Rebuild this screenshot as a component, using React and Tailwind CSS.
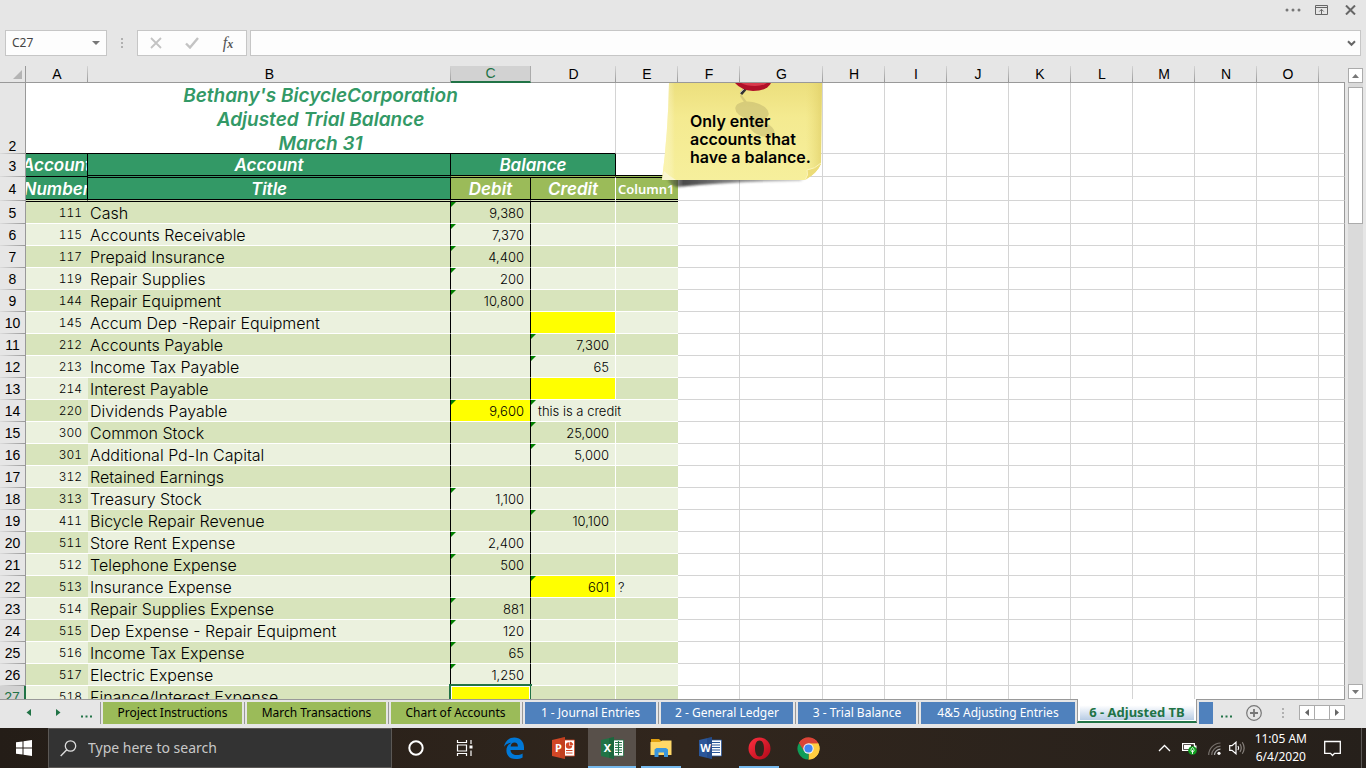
import React from "react";

const ACCOUNTS = [
  { row: 5, no: 111, title: "Cash", debit: "9,380" },
  { row: 6, no: 115, title: "Accounts Receivable", debit: "7,370" },
  { row: 7, no: 117, title: "Prepaid Insurance", debit: "4,400" },
  { row: 8, no: 119, title: "Repair Supplies", debit: "200" },
  { row: 9, no: 144, title: "Repair Equipment", debit: "10,800" },
  { row: 10, no: 145, title: "Accum Dep -Repair Equipment", markCredit: true },
  { row: 11, no: 212, title: "Accounts Payable", credit: "7,300" },
  { row: 12, no: 213, title: "Income Tax Payable", credit: "65" },
  { row: 13, no: 214, title: "Interest Payable", markCredit: true },
  { row: 14, no: 220, title: "Dividends Payable", debit: "9,600", markDebit: true, note: "this is a credit" },
  { row: 15, no: 300, title: "Common Stock", credit: "25,000" },
  { row: 16, no: 301, title: "Additional Pd-In Capital", credit: "5,000" },
  { row: 17, no: 312, title: "Retained Earnings" },
  { row: 18, no: 313, title: "Treasury Stock", debit: "1,100" },
  { row: 19, no: 411, title: "Bicycle Repair Revenue", credit: "10,100" },
  { row: 20, no: 511, title: "Store Rent Expense", debit: "2,400" },
  { row: 21, no: 512, title: "Telephone Expense", debit: "500" },
  { row: 22, no: 513, title: "Insurance Expense", credit: "601", markCredit: true, extra: "?" },
  { row: 23, no: 514, title: "Repair Supplies Expense", debit: "881" },
  { row: 24, no: 515, title: "Dep Expense - Repair Equipment", debit: "120" },
  { row: 25, no: 516, title: "Income Tax Expense", debit: "65" },
  { row: 26, no: 517, title: "Electric Expense", debit: "1,250" },
  { row: 27, no: 518, title: "Finance/Interest Expense", markDebit: true, active: true },
];

const COLUMNS = ["A", "B", "C", "D", "E", "F", "G", "H", "I", "J", "K", "L", "M", "N", "O"];
const EMPTY = ["F", "G", "H", "I", "J", "K", "L", "M", "N", "O"];

const SHEETS = [
  { name: "Project Instructions", style: "w-[139px] bg-[#9bbb59] text-black" },
  { name: "March Transactions", style: "w-[139px] bg-[#9bbb59] text-black" },
  { name: "Chart of Accounts", style: "w-[129px] bg-[#9bbb59] text-black" },
  { name: "1 - Journal Entries", style: "w-[131px] bg-[#4f81bd] text-white" },
  { name: "2 - General Ledger", style: "w-[132px] bg-[#4f81bd] text-white" },
  { name: "3 - Trial Balance", style: "w-[118px] bg-[#4f81bd] text-white" },
  { name: "4&5 Adjusting Entries", style: "w-[154px] bg-[#4f81bd] text-white" },
];

function Flag() {
  return (
    <svg className="absolute left-0 top-0" width="5" height="5" viewBox="0 0 5 5" aria-hidden="true">
      <path d="M0 0H5L0 5Z" fill="#008000" />
    </svg>
  );
}

function TitleBar() {
  return (
    <header className="flex h-[30px] shrink-0 items-start justify-end gap-[14px] pr-[10px] pt-[3px]">
      <button aria-label="More" className="flex h-[14px] w-4 items-center">
        <svg width="16" height="4" viewBox="0 0 16 4"><g fill="#777"><circle cx="2" cy="2" r="1.5" /><circle cx="8" cy="2" r="1.5" /><circle cx="14" cy="2" r="1.5" /></g></svg>
      </button>
      <button aria-label="Show ribbon" className="mt-[2px]">
        <svg width="13" height="10" viewBox="0 0 13 10"><path d="M.5 .5H12.500V9.500H.5ZM.5 2.500H12.500M6.500 9V4.500M4.300 6.500L6.500 4.300L8.700 6.500" fill="none" stroke="#666" /></svg>
      </button>
      <button aria-label="Close" className="ml-[3px] mt-[2px]">
        <svg width="11" height="10" viewBox="0 0 11 10"><path d="M1 .5L10 9.500M10 .5L1 9.500" stroke="#666" strokeWidth="2" /></svg>
      </button>
    </header>
  );
}

function FormulaBar() {
  return (
    <div className="mb-[10px] flex h-[26px] shrink-0 pl-[5px] pr-[5px]">
      <div className="flex w-[102px] items-center border border-[#c6c6c6] bg-[#fdfdfd] pl-[6px] pr-[6px]">
        <input aria-label="Name box" defaultValue="C27" className="w-0 flex-1 bg-transparent text-xs text-[#444] outline-none" />
        <button aria-label="Open name list"><svg width="8" height="4" viewBox="0 0 8 4"><path d="M0 0H8L4 4Z" fill="#777" /></svg></button>
      </div>
      <div className="flex w-[30px] items-center justify-center">
        <svg width="2" height="10" viewBox="0 0 2 10"><path d="M0 0h2v2h-2zM0 4h2v2h-2zM0 8h2v2h-2z" fill="#b0b0b0" /></svg>
      </div>
      <div className="mr-[3px] flex w-[110px] items-center border border-[#c6c6c6] bg-[#fdfdfd]">
        <button aria-label="Cancel" className="flex flex-1 justify-center"><svg width="12" height="12" viewBox="0 0 12 12"><path d="M1 1L11 11M11 1L1 11" stroke="#c3c3c3" strokeWidth="1.800" /></svg></button>
        <button aria-label="Enter" className="flex flex-1 justify-center"><svg width="14" height="12" viewBox="0 0 14 12"><path d="M1 6.500L5 10.500L13 1" fill="none" stroke="#c3c3c3" strokeWidth="2.400" /></svg></button>
        <button aria-label="Insert function" className="flex flex-1 justify-center font-['Liberation_Serif',serif] text-base italic leading-4 text-[#555]">f<span className="pt-[3px] text-xs leading-3 font-bold">x</span></button>
      </div>
      <div className="flex flex-1 items-center border border-[#c6c6c6] bg-[#fdfdfd] pr-1">
        <input aria-label="Formula" className="w-0 flex-1 bg-transparent px-1 text-xs outline-none" />
        <button aria-label="Expand formula bar"><svg width="9" height="7" viewBox="0 0 9 7"><path d="M1 1.200L4.500 4.800L8 1.200" fill="none" stroke="#666" strokeWidth="2" /></svg></button>
      </div>
    </div>
  );
}

function RowHead({ n, active = false, low = false }) {
  const tone = active
    ? "bg-[#d2d2d2] text-[#217346] border-r-2 border-r-[#217346]"
    : "bg-[#e6e6e6] bg-[linear-gradient(to_right,#dcdcdc,#999)] bg-size-[100%_1px] bg-bottom bg-no-repeat border-r border-r-[#999]";
  return (
    <th scope="row" className={`p-0 text-center font-['Liberation_Sans',sans-serif] text-sm font-normal leading-4 ${tone} ${low ? "align-bottom" : "align-middle"}`}>{n}</th>
  );
}

function EmptyCells() {
  return (
    <>
      {EMPTY.map((c) => <td key={c} className="border-b border-r border-[#d4d4d4] bg-white p-0" />)}
      <td className="border-b border-r border-b-[#d4d4d4] border-r-[#999] bg-white p-0" />
    </>
  );
}

function AccountRow({ a }) {
  const odd = a.row % 2 === 1;
  const band = odd ? "bg-[#d8e4bc]" : "bg-[#ebf1de]";
  const noBand = (a.row < 13) === odd ? "bg-[#d8e4bc]" : "bg-[#ebf1de]";
  const first = a.row === 5;
  const edge = first ? "border-b border-b-white border-t border-t-black" : "border-b border-b-white";
  const amount = "relative p-0 pr-[6px] pt-px text-right text-[13px] leading-4";
  return (
    <tr className={first ? "h-[23px]" : "h-[22px]"}>
      <RowHead n={a.row} active={a.active} />
      <td className={`${edge} ${noBand} p-0 pr-[6px] text-right text-xs leading-4 tabular-nums`}>{a.no}</td>
      <td className={`${edge} ${band} whitespace-nowrap border-r border-r-black p-0 pl-[2px] text-base leading-5`}>{a.title}</td>
      <td className={`${edge} ${a.markDebit ? "bg-[#ffff00]" : band} border-r border-r-black ${amount}`}>
        {a.debit && <Flag />}
        {a.debit}
        {a.active && <div className="absolute -left-[2px] -top-[2px] h-[25px] w-[83px] border-2 border-[#217346] shadow-[inset_0_0_0_1px_#fff]" />}
      </td>
      <td className={`${edge} ${a.markCredit ? "bg-[#ffff00]" : band} ${a.note ? "" : "border-r border-r-white"} ${amount}`}>
        {(a.credit || a.note) && <Flag />}
        {a.credit}
        {a.note && <div className="relative z-10 w-0 whitespace-nowrap pl-[7px]">{a.note}</div>}
      </td>
      <td className={`${edge} ${band} p-0 pl-[2px] pt-px text-[13px] leading-4`}>{a.extra}</td>
      <EmptyCells />
    </tr>
  );
}

const HEAD = "p-0 overflow-hidden font-semibold italic text-[17px] leading-5 text-white";

function Sheet() {
  return (
    <table className="w-full table-fixed border-separate border-spacing-0 font-['Inter',sans-serif] font-light text-black">
      <colgroup>
        <col className="w-[26px]" />
        <col className="w-[62px]" />
        <col className="w-[363px]" />
        <col className="w-[80px]" />
        <col className="w-[85px]" />
        <col className="w-[62px]" />
        <col className="w-[62px]" />
        <col className="w-[83px]" />
        <col className="w-[62px]" />
        <col className="w-[62px]" />
        <col className="w-[62px]" />
        <col className="w-[62px]" />
        <col className="w-[62px]" />
        <col className="w-[62px]" />
        <col className="w-[62px]" />
        <col className="w-[62px]" />
        <col />
      </colgroup>
      <thead>
        <tr className="h-[17px] font-['Liberation_Sans',sans-serif] text-sm leading-[15px]">
          <th aria-label="Select all" className="border-b border-r border-[#999] p-0">
            <svg className="ml-auto mr-[3px]" width="9" height="9" viewBox="0 0 9 9"><path d="M9 0V9H0Z" fill="#b4b4b4" /></svg>
          </th>
          {COLUMNS.map((c) => (
            <th
              key={c}
              scope="col"
              className={
                c === "C"
                  ? "border-b-2 border-r border-b-[#217346] border-r-[#ababab] bg-[#d2d2d2] p-0 font-normal text-[#217346]"
                  : "border-b border-b-[#999] bg-[linear-gradient(to_bottom,#d4d4d4,#999)] bg-size-[1px_100%] bg-right bg-no-repeat p-0 font-normal"
              }
            >
              {c}
            </th>
          ))}
          <th aria-label="P" className="border-b border-b-[#999] p-0" />
        </tr>
      </thead>
      <tbody>
        <tr className="h-[71px]">
          <RowHead n={2} low />
          <td colSpan={4} className="border-b border-r border-b-black border-r-[#d4d4d4] bg-white p-0 text-center text-[19px] font-semibold italic leading-6 text-[#339966]">
            <div className="flex h-[70px] flex-col items-center justify-center pt-1">
              <div>Bethany&apos;s BicycleCorporation</div>
              <div>Adjusted Trial Balance</div>
              <div>March 31</div>
            </div>
          </td>
          <td className="border-b border-r border-[#d4d4d4] bg-white p-0" />
          <EmptyCells />
        </tr>
        <tr className="h-[23px]">
          <RowHead n={3} />
          <td className={`${HEAD} border-b border-r border-black bg-[#339966]`}><div className="flex justify-center">Account</div></td>
          <td className={`${HEAD} border-b border-r border-b-[#339966] border-r-black bg-[#339966] text-center shadow-[inset_0_-1px_0_#000]`}>Account</td>
          <td colSpan={2} className={`${HEAD} border-b border-r border-b-[#9bbb59] border-r-black bg-[#339966] text-center shadow-[inset_0_-1px_0_#000]`}>Balance</td>
          <td className="border-b border-r border-b-[#9bbb59] border-r-[#d4d4d4] bg-white p-0 shadow-[inset_0_-1px_0_#000]" />
          <EmptyCells />
        </tr>
        <tr className="h-6">
          <RowHead n={4} />
          <td className={`${HEAD} border-b border-r border-b-[#d8e4bc] border-r-black bg-[#339966] shadow-[inset_0_-1px_0_#000]`}><div className="flex justify-center">Number</div></td>
          <td className={`${HEAD} border-b border-r border-t border-b-[#d8e4bc] border-r-black border-t-black bg-[#339966] text-center shadow-[inset_0_-1px_0_#000]`}>Title</td>
          <td className={`${HEAD} border-b border-r border-t border-b-[#d8e4bc] border-r-black border-t-black bg-[#9bbb59] text-center shadow-[inset_0_-1px_0_#000]`}>Debit</td>
          <td className={`${HEAD} border-b border-r border-t border-b-[#d8e4bc] border-r-white border-t-black bg-[#9bbb59] text-center shadow-[inset_0_-1px_0_#000]`}>Credit</td>
          <td className="overflow-hidden whitespace-nowrap border-b border-t border-b-[#d8e4bc] border-t-black bg-[#9bbb59] p-0 pl-[2px] font-['Noto_Sans',sans-serif] text-[13px] font-semibold leading-5 text-white shadow-[inset_0_-1px_0_#000]">Column1</td>
          <EmptyCells />
        </tr>
        {ACCOUNTS.map((a) => <AccountRow key={a.row} a={a} />)}
      </tbody>
    </table>
  );
}

function StickyNote() {
  return (
    <aside className="absolute left-[655px] top-[17px] z-10 h-[112px] w-[175px]">
      <svg className="absolute inset-0" width="175" height="112" viewBox="0 0 175 112" aria-hidden="true">
        <defs>
          <linearGradient id="paper" x1="0" y1="0" x2="0" y2="1">
            <stop offset="0" stopColor="#ecdf7d" />
            <stop offset=".35" stopColor="#f4ea90" />
            <stop offset="1" stopColor="#f6ef9c" />
          </linearGradient>
          <linearGradient id="side" x1="0" y1="0" x2="1" y2="0">
            <stop offset="0" stopColor="#fff6ae" stopOpacity=".7" />
            <stop offset=".08" stopColor="#fff" stopOpacity="0" />
            <stop offset=".9" stopColor="#e8d870" stopOpacity="0" />
            <stop offset="1" stopColor="#dfce66" stopOpacity=".7" />
          </linearGradient>
          <linearGradient id="shade" x1="0" y1="0" x2="1" y2="0">
            <stop offset="0" stopColor="#333" stopOpacity=".2" />
            <stop offset=".12" stopColor="#333" stopOpacity=".9" />
            <stop offset="1" stopColor="#777" stopOpacity=".4" />
          </linearGradient>
          <filter id="soft" x="-10%" y="-50%" width="120%" height="200%"><feGaussianBlur stdDeviation="1" /></filter>
        </defs>
        <path d="M12 95L150 95L145 98Q80 98 22 104Q14 102 12 95Z" fill="url(#shade)" filter="url(#soft)" />
        <path d="M14 0H167L166 81Q162 90 150 97H7Q13 50 14 0Z" fill="url(#paper)" />
        <path d="M14 0H167L166 81Q162 90 150 97H7Q13 50 14 0Z" fill="url(#side)" />
        <path d="M7 97L9 88Q14 93 21 97Z" fill="#faf6d0" />
        <path d="M150 97Q154 92 152 87Q160 86 166 80Q163 90 150 97Z" fill="#ecdc78" />
        <path d="M150 97Q154 92 152 87Q160 86 166 80" fill="none" stroke="#fbf5bb" strokeWidth="1" />
        <g fill="#b9ae6a" opacity=".45">
          <path d="M86 11L95 23L92 24L85 13Z" />
          <ellipse cx="97" cy="28" rx="17" ry="9" transform="rotate(12 97 28)" />
          <ellipse cx="107" cy="46" rx="13" ry="7" transform="rotate(20 107 46)" />
          <path d="M92 34L108 35L110 42L98 42Z" />
        </g>
        <path d="M93 3L86 11" stroke="#333" strokeWidth="3" />
        <path d="M91 4L85 10" stroke="#bbb" strokeWidth="1" />
        <path d="M80 0H116Q112 8 98 8Q86 7 80 0Z" fill="#b01028" />
        <path d="M86 0H112Q108 3 100 3Q91 3 86 0Z" fill="#d93a4c" />
      </svg>
      <p className="relative whitespace-nowrap pl-[35px] pt-[29px] font-['Inter',sans-serif] text-base font-semibold leading-[18px] text-black">
        Only enter<br />accounts that<br />have a balance.
      </p>
    </aside>
  );
}

function VerticalScroll() {
  return (
    <div className="flex w-[21px] shrink-0 flex-col items-center pr-px pt-[2px]">
      <button aria-label="Scroll up" className="flex h-[15px] w-[15px] shrink-0 items-center justify-center border border-[#ababab] bg-white">
        <svg width="7" height="4" viewBox="0 0 7 4"><path d="M0 4H7L3.500 0Z" fill="#777" /></svg>
      </button>
      <div className="w-[15px] flex-1 bg-[#dadada] pt-1">
        <div className="h-[137px] border border-[#ababab] bg-white" />
      </div>
      <button aria-label="Scroll down" className="flex h-[15px] w-[15px] shrink-0 items-center justify-center border border-[#ababab] bg-white">
        <svg width="7" height="4" viewBox="0 0 7 4"><path d="M0 0H7L3.500 4Z" fill="#777" /></svg>
      </button>
    </div>
  );
}

function SheetTabs() {
  return (
    <div className="relative flex h-[29px] shrink-0 items-start bg-[#e6e6e6] pr-[21px] text-xs">
      <div className="absolute left-0 right-[21px] top-0 h-px bg-[#999]" />
      <div className="flex h-[27px] w-[100px] shrink-0 items-center pl-[26px]">
        <button aria-label="Previous sheets"><svg width="5" height="7" viewBox="0 0 5 7"><path d="M5 0V7L.5 3.500Z" fill="#217346" /></svg></button>
        <button aria-label="Next sheets" className="ml-[25px]"><svg width="5" height="7" viewBox="0 0 5 7"><path d="M0 0V7L4.500 3.500Z" fill="#217346" /></svg></button>
        <button aria-label="More sheets" className="ml-5 mt-2"><svg width="11" height="3" viewBox="0 0 11 3"><path d="M0 .5h2v2h-2zM4.500 .5h2v2h-2zM9 .5h2v2h-2z" fill="#217346" /></svg></button>
      </div>
      {SHEETS.map((s) => (
        <div key={s.name} className="mt-[3px] shrink-0 border-l border-[#999] px-[2px]">
          <button className={`block h-[22px] whitespace-nowrap text-center leading-[22px] ${s.style}`}>{s.name}</button>
        </div>
      ))}
      <div className="relative h-6 w-[120px] shrink-0 border-b-2 border-l border-r border-b-[#217346] border-l-[#999] border-r-[#999] bg-white px-[2px] pb-px">
        <button className="block h-[21px] w-full whitespace-nowrap bg-linear-to-b from-white from-30% to-[#b8cce4] pt-[3px] text-center text-[13px] font-bold leading-5 text-[#217346]">6 - Adjusted TB</button>
      </div>
      <button aria-label="Next sheet" className="ml-[2px] mt-[3px] h-[22px] w-[14px] shrink-0 bg-[#4f81bd]" />
      <div className="flex h-[27px] flex-1 items-center justify-end">
        <svg className="mr-[14px] mt-2" width="11" height="3" viewBox="0 0 11 3"><path d="M0 .5h2v2h-2zM4.500 .5h2v2h-2zM9 .5h2v2h-2z" fill="#217346" /></svg>
        <button aria-label="New sheet">
          <svg width="16" height="16" viewBox="0 0 16 16"><circle cx="8" cy="8" r="7.300" fill="none" stroke="#777" strokeWidth="1.200" /><path d="M8 4V12M4 8H12" stroke="#777" strokeWidth="1.800" /></svg>
        </button>
        <svg className="ml-5" width="2" height="10" viewBox="0 0 2 10"><path d="M0 0h2v2h-2zM0 4h2v2h-2zM0 8h2v2h-2z" fill="#b0b0b0" /></svg>
        <div className="ml-[15px] flex h-[15px] w-[46px] border border-[#ababab] bg-white">
          <button aria-label="Scroll left" className="flex w-[15px] items-center justify-center border-r border-[#ababab]"><svg width="4" height="7" viewBox="0 0 4 7"><path d="M4 0V7L0 3.500Z" fill="#666" /></svg></button>
          <div className="flex-1" />
          <button aria-label="Scroll right" className="flex w-[15px] items-center justify-center border-l border-[#ababab]"><svg width="4" height="7" viewBox="0 0 4 7"><path d="M0 0V7L4 3.500Z" fill="#666" /></svg></button>
        </div>
      </div>
    </div>
  );
}

function OfficeIcon({ color, dark, letter, children }) {
  return (
    <svg width="23" height="22" viewBox="0 0 23 22">
      <path d="M12 3H22.500V19H12Z" fill="#fff" stroke={color} strokeWidth=".8" />
      {children}
      <path d="M0 3L13 0V22L0 19Z" fill={color} />
      <path d="M8 1.200L13 0V22L8 20.800Z" fill={dark} opacity=".35" />
      <text x="6.500" y="15" textAnchor="middle" fontFamily="Noto Sans, sans-serif" fontWeight="700" fontSize="11" fill="#fff">{letter}</text>
    </svg>
  );
}

const APPS = [
  {
    name: "Cortana",
    icon: <svg width="18" height="18" viewBox="0 0 18 18"><circle cx="9" cy="9" r="6.700" fill="none" stroke="#fff" strokeWidth="2" /></svg>,
  },
  {
    name: "Task View",
    icon: (
      <svg width="18" height="16" viewBox="0 0 18 16" fill="none" stroke="#fff" strokeWidth="1.200">
        <path d="M1.500 0V2.500H10.500V0M1.500 16V13.500H10.500V16M1.500 5H10.500V11H1.500ZM15 0V4M15 10.500V16" />
        <path d="M13.500 5.500H16.500V8.500H13.500Z" fill="#fff" stroke="none" />
      </svg>
    ),
  },
  {
    name: "Edge",
    icon: (
      <svg width="20" height="22" viewBox="0 0 20 22">
        <path d="M0 9.800C1 4 5 .5 10.300 .5C16 .5 20 4.500 20 10.300V13H6.500C6.800 16.300 9.300 18 12.500 18C15 18 17 17.400 18.600 16.400V20.500C16.800 21.500 14.500 22 11.700 22C6 22 2.400 18.600 2.400 13.500C2.400 10 4.200 7.300 7.300 5.800C4.300 6 1.500 7.400 0 9.800ZM6.600 9.400H13.900C13.900 6.800 12.700 5.400 10.500 5.400C8.300 5.400 6.900 7 6.600 9.400Z" fill="#0078d7" />
      </svg>
    ),
  },
  {
    name: "PowerPoint",
    icon: (
      <OfficeIcon color="#d24726" dark="#a53010" letter="P">
        <circle cx="17" cy="8.500" r="3.200" fill="#d24726" /><path d="M17 4.500H21V8.500H17Z" fill="#fff" /><path d="M18 5.200A3 3 0 0 1 20.800 7.700H18ZM14 13.500H20.500M14 16H20.500" fill="#d24726" stroke="#d24726" />
      </OfficeIcon>
    ),
  },
  {
    name: "Excel",
    running: true,
    active: true,
    icon: (
      <OfficeIcon color="#217346" dark="#0f5230" letter="X">
        <path d="M14 5.500H21M14 8H21M14 10.500H21M14 13H21M14 15.500H21M17.500 4V18" stroke="#217346" strokeWidth="1.100" />
      </OfficeIcon>
    ),
  },
  {
    name: "File Explorer",
    running: true,
    icon: (
      <svg width="22" height="20" viewBox="0 0 22 20">
        <path d="M1 1H9L11 3V6H1Z" fill="#e0a010" /><path d="M.5 4H10L12 2.500H21.500V17H.5Z" fill="#ffd868" />
        <path d="M4.500 19V11.500L6.500 10H16L18 11.500V19H14V14.500H8.500V19Z" fill="#3a96dd" />
      </svg>
    ),
  },
  {
    name: "Word",
    icon: (
      <OfficeIcon color="#2b579a" dark="#16396f" letter="W">
        <path d="M13 5.500H21M13 8H21M13 10.500H21M13 13H21M13 15.500H21" stroke="#2b579a" strokeWidth="1.100" />
      </OfficeIcon>
    ),
  },
  {
    name: "Opera",
    running: true,
    icon: (
      <svg width="23" height="23" viewBox="0 0 23 23">
        <defs><linearGradient id="opera" x1="0" y1="0" x2="1" y2="1"><stop offset="0" stopColor="#ff3040" /><stop offset="1" stopColor="#b00818" /></linearGradient></defs>
        <path fillRule="evenodd" d="M11.500 .5A11 11 0 0 1 11.500 22.500A11 11 0 0 1 11.500 .5ZM11.500 3.500C8.500 3.500 7 7 7 11.500C7 16 8.500 19.500 11.500 19.500C14.500 19.500 16 16 16 11.500C16 7 14.500 3.500 11.500 3.500Z" fill="url(#opera)" />
      </svg>
    ),
  },
  {
    name: "Chrome",
    icon: (
      <svg width="23" height="23" viewBox="0 0 23 23">
        <path d="M11.500 11.500L1.970 6A11 11 0 0 1 21.030 6Z" fill="#db4437" />
        <path d="M11.500 11.500L21.030 6A11 11 0 0 1 11.500 22.500Z" fill="#ffcd40" />
        <path d="M11.500 11.500L11.500 22.500A11 11 0 0 1 1.970 6Z" fill="#0f9d58" />
        <path d="M11.500 6.300H21.200A11 11 0 0 1 11.500 22.500L16 14Z" fill="#ffcd40" />
        <path d="M11.500 11.500L7 14L1.970 6A11 11 0 0 1 21.200 6.300H11.500Z" fill="#db4437" />
        <circle cx="11.500" cy="11.500" r="5.200" fill="#f1f1f1" /><circle cx="11.500" cy="11.500" r="4.100" fill="#4285f4" />
      </svg>
    ),
  },
];

function Taskbar() {
  return (
    <footer className="flex h-10 shrink-0 bg-linear-to-r from-[#241d17] via-[#31261d] via-50% to-[#26201b] text-white">
      <button aria-label="Start" className="flex w-12 items-center justify-center">
        <svg width="16" height="16" viewBox="0 0 16 16"><path d="M0 2.300L6.500 1.400V7.500H0ZM7.500 1.200L16 0V7.500H7.500ZM0 8.500H6.500V14.600L0 13.700ZM7.500 8.500H16V16L7.500 14.800Z" fill="#fff" /></svg>
      </button>
      <label className="flex w-[344px] items-center border border-[#5b5855] bg-[#333] pl-[11px]">
        <svg width="17" height="17" viewBox="0 0 17 17"><circle cx="10.500" cy="6" r="5.200" fill="none" stroke="#ddd" strokeWidth="1.300" /><path d="M6.800 9.800L.7 16" stroke="#ddd" strokeWidth="1.400" /></svg>
        <input aria-label="Search" placeholder="Type here to search" className="ml-[11px] w-0 flex-1 bg-transparent text-sm text-[#ddd] placeholder-[#c8c8c8] outline-none" />
      </label>
      <nav className="flex gap-px">
        {APPS.map((app) => (
          <button key={app.name} aria-label={app.name} className={app.active ? "relative flex w-12 items-center justify-center bg-[#58504a]" : "relative flex w-12 items-center justify-center"}>
            {app.icon}
            {app.running && <span className={app.active ? "absolute inset-x-0 bottom-0 h-[2px] bg-[#76b9ed]" : "absolute inset-x-1 bottom-0 h-[2px] bg-[#76b9ed]"} />}
          </button>
        ))}
      </nav>
      <div className="ml-auto flex items-center">
        <button aria-label="Show hidden icons" className="mr-[11px]"><svg width="13" height="8" viewBox="0 0 13 8"><path d="M1 7L6.500 1.500L12 7" fill="none" stroke="#fff" strokeWidth="1.300" /></svg></button>
        <button aria-label="Battery" className="mr-[10px]">
          <svg width="16" height="13" viewBox="0 0 16 13"><path d="M.6 1.600H12.400V8.400H.6Z" fill="none" stroke="#fff" strokeWidth="1.200" /><path d="M2 3H9V7H2ZM13 3.500h1.500v3h-1.500z" fill="#fff" /><circle cx="10.500" cy="8.500" r="4.300" fill="#10a020" /><path d="M10.500 5.500C8.500 7.500 8.500 9.500 10.500 10C12.500 9.500 12.500 7.500 10.500 5.500ZM10.500 8V12" fill="none" stroke="#fff" strokeWidth=".9" /></svg>
        </button>
        <button aria-label="Network" className="mr-[8px]">
          <svg width="13" height="13" viewBox="0 0 13 13" fill="none" strokeWidth="1.200"><path d="M.7 13A12 12 0 0 1 12.500 1M3.700 13A9 9 0 0 1 12.500 4.200" stroke="#77716c" /><path d="M6.500 13A6 6 0 0 1 12.500 7.200" stroke="#aaa" /><circle cx="11" cy="11.300" r="1.600" fill="#fff" /></svg>
        </button>
        <button aria-label="Volume" className="mr-[9px]">
          <svg width="17" height="14" viewBox="0 0 17 14" fill="none" strokeWidth="1.200"><path d="M.7 4.700H3L7 1.200V12.800L3 9.300H.7Z" stroke="#fff" /><path d="M9 5Q10.300 7 9 9" stroke="#fff" /><path d="M11 3Q13.500 7 11 11M13.300 1.200Q17 7 13.300 12.800" stroke="#88827d" /></svg>
        </button>
        <button className="whitespace-nowrap text-center text-xs leading-[18px]">11:05 AM<br />6/4/2020</button>
        <button aria-label="Notifications" className="ml-[17px] mr-[20px]"><svg width="17" height="17" viewBox="0 0 17 17"><path d="M.7 1.500H16.300V13.300H10.500L8.500 15.500L6.500 13.300H.7Z" fill="none" stroke="#fff" strokeWidth="1.300" /></svg></button>
        <div className="mr-1 h-10 w-px bg-[#5b5855]" />
      </div>
    </footer>
  );
}

export default function App() {
  return (
    <div className="flex h-screen flex-col overflow-hidden bg-[#e6e6e6] font-['Noto_Sans',sans-serif]">
      <TitleBar />
      <FormulaBar />
      <main className="flex min-h-0 flex-1">
        <div className="relative min-w-0 flex-1 overflow-hidden">
          <Sheet />
          <StickyNote />
        </div>
        <VerticalScroll />
      </main>
      <SheetTabs />
      <Taskbar />
    </div>
  );
}
